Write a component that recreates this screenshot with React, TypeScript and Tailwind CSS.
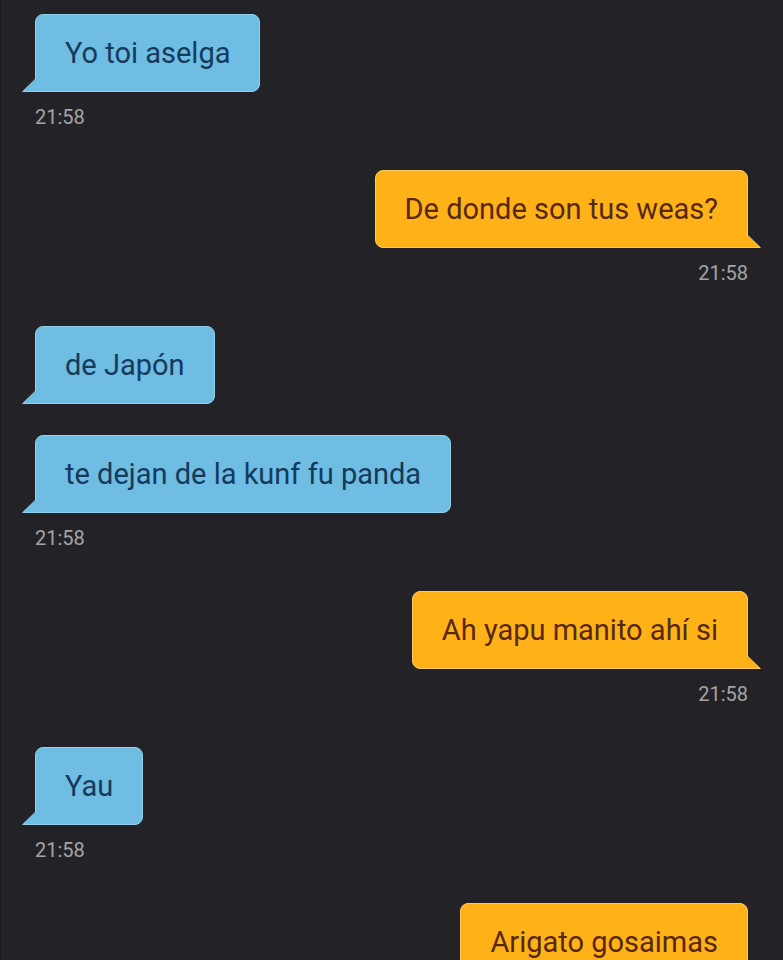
import React from 'react';
import { clsx } from 'clsx';

interface Message {
  text: string;
  mine?: boolean;
  time?: string;
}

const MESSAGES: Message[] = [
  { text: 'Yo toi aselga', time: '21:58' },
  { text: 'De donde son tus weas?', mine: true, time: '21:58' },
  { text: 'de Japón' },
  { text: 'te dejan de la kunf fu panda', time: '21:58' },
  { text: 'Ah yapu manito ahí si', mine: true, time: '21:58' },
  { text: 'Yau', time: '21:58' },
  { text: 'Arigato gosaimas', mine: true },
];

const Tail: React.FC<{ mine?: boolean }> = ({ mine }) => (
  <svg
    viewBox="0 0 15 14"
    className={clsx(
      'absolute -bottom-px h-3.5 w-[15px]',
      mine ? '-right-3.5 -scale-x-100' : '-left-3.5'
    )}
    aria-hidden="true"
  >
    <path d="M15 0 L14 1 L0 14 H15 Z" fill={mine ? '#ffb217' : '#6fbde2'} />
    <path
      d="M13.5 1 L0.8 13.5 H15"
      fill="none"
      stroke={mine ? '#ffca62' : '#92cfea'}
      strokeWidth="1"
    />
  </svg>
);

const Bubble: React.FC<{ message: Message }> = ({ message }) => {
  const { text, mine, time } = message;

  return (
    <li className={clsx('flex flex-col', mine ? 'items-end' : 'items-start', time ? 'pb-10' : 'pb-[31px]')}>
      <p
        className={clsx(
          'relative rounded-lg border px-[29px] py-5 text-[29px] leading-9',
          mine
            ? 'rounded-br-none border-[#ffca62] bg-[#ffb217] text-[#57280f]'
            : 'rounded-bl-none border-[#92cfea] bg-[#6fbde2] text-[#143a5c]'
        )}
      >
        {text}
        <Tail mine={mine} />
      </p>
      {time && <time className="pt-3 text-xl leading-[26px] text-[#a3a3a5]">{time}</time>}
    </li>
  );
};

const App: React.FC = () => {
  return (
    <main className="h-screen overflow-hidden border-l border-[#1a1a1d] bg-[#232327] font-['Roboto',sans-serif]">
      <ul className="flex flex-col pt-3.5 pr-[35px] pl-[34px]">
        {MESSAGES.map((message) => (
          <Bubble key={message.text} message={message} />
        ))}
      </ul>
    </main>
  );
};

export default App;
